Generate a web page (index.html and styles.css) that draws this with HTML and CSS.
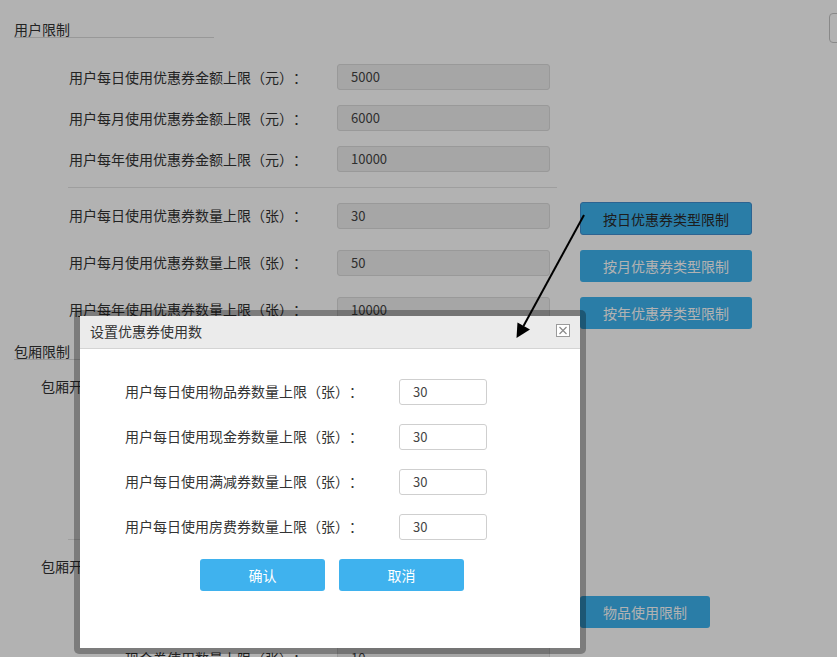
FILE: index.html
```html
<!DOCTYPE html>
<html lang="zh-CN">
<head>
<meta charset="utf-8">
<title>优惠券使用限制</title>
<link rel="stylesheet" href="styles.css">
</head>
<body>
<div class="page">
  <div class="top-bar">
    <div class="section-title first">用户限制</div>
    <button class="corner-btn" aria-label="保存"></button>
  </div>

  <div class="rows rows-amount">
    <div class="row"><span class="label">用户每日使用优惠券金额上限（元）：</span><div class="field">5000</div></div>
    <div class="row"><span class="label">用户每月使用优惠券金额上限（元）：</span><div class="field">6000</div></div>
    <div class="row"><span class="label">用户每年使用优惠券金额上限（元）：</span><div class="field">10000</div></div>
  </div>

  <div class="divider"></div>

  <div class="rows rows-count">
    <div class="row"><span class="label">用户每日使用优惠券数量上限（张）：</span><div class="field">30</div><button class="btn btn-type dark-text">按日优惠券类型限制</button></div>
    <div class="row"><span class="label">用户每月使用优惠券数量上限（张）：</span><div class="field">50</div><button class="btn btn-type">按月优惠券类型限制</button></div>
    <div class="row"><span class="label">用户每年使用优惠券数量上限（张）：</span><div class="field">10000</div><button class="btn btn-type">按年优惠券类型限制</button></div>
  </div>

  <div class="section-title">包厢限制</div>

  <div class="row row-outer"><span class="label">包厢开关：</span></div>

  <div class="rows rows-hidden">
    <div class="row"><span class="label">包厢开放开始时间：</span><div class="field short">09:00</div></div>
    <div class="row"><span class="label">包厢开放结束时间：</span><div class="field short">22:00</div></div>
    <div class="row"><span class="label">包厢最长使用时长：</span><div class="field short">4</div></div>
  </div>

  <div class="divider second"></div>

  <div class="row row-outer row-outer-2"><span class="label">包厢开放设置：</span></div>

  <div class="row row-btn"><button class="btn btn-item">物品使用限制</button></div>

  <div class="row row-bottom"><span class="label">现金券使用数量上限（张）：</span><div class="field">10</div></div>
</div>

<div class="overlay"></div>

<div class="modal">
  <div class="modal-header">
    <span class="modal-title">设置优惠券使用数</span>
    <button class="modal-close" aria-label="关闭">
      <svg width="14" height="13" viewBox="0 0 14 13"><rect x="0.5" y="0.5" width="13" height="12" fill="#fff" stroke="#9a9a9a"/><path d="M3.5 3 L10.5 10 M10.5 3 L3.5 10" stroke="#8a8a8a" stroke-width="1.2"/></svg>
    </button>
  </div>
  <div class="modal-body">
    <div class="m-row"><span class="m-label">用户每日使用物品券数量上限（张）：</span><div class="m-field">30</div></div>
    <div class="m-row"><span class="m-label">用户每日使用现金券数量上限（张）：</span><div class="m-field">30</div></div>
    <div class="m-row"><span class="m-label">用户每日使用满减券数量上限（张）：</span><div class="m-field">30</div></div>
    <div class="m-row"><span class="m-label">用户每日使用房费券数量上限（张）：</span><div class="m-field">30</div></div>
    <div class="m-actions">
      <button class="m-btn">确认</button>
      <button class="m-btn">取消</button>
    </div>
  </div>
</div>

<svg class="arrow" width="837" height="657" viewBox="0 0 837 657">
  <line x1="584" y1="215" x2="523.5" y2="326" stroke="#000" stroke-width="2"/>
  <polygon points="516.5,338 517.5,322.5 530,329.5" fill="#000"/>
</svg>
</body>
</html>
```

FILE: styles.css
```css
* {
  box-sizing: border-box;
}

html, body {
  margin: 0;
  padding: 0;
  width: 837px;
  height: 657px;
  overflow: hidden;
  background: #fff;
}

body {
  font-family: "Noto Sans CJK SC", "Microsoft YaHei", sans-serif;
  font-size: 14px;
  color: #333;
  position: relative;
  text-spacing-trim: space-all;
}

button {
  font-family: inherit;
  cursor: pointer;
}

.page {
  width: 837px;
  overflow: hidden;
}

.top-bar {
  display: flex;
  align-items: flex-start;
  height: 43px;
  overflow: hidden;
}

.section-title {
  margin-left: 14px;
  width: 200px;
  flex-shrink: 0;
  height: 17px;
  line-height: 16px;
  font-size: 14px;
  color: #333;
  border-bottom: 1px solid #dadada;
  margin-top: 14px;
}

.section-title.first {
  margin-top: 21px;
}

.corner-btn {
  margin-left: 615px;
  margin-top: 13px;
  width: 60px;
  height: 30px;
  flex-shrink: 0;
  border: 1px solid #c4c4c4;
  border-radius: 4px;
  background: #fff;
  padding: 0;
}

.rows {
  display: flex;
  flex-direction: column;
  padding-left: 69px;
}

.row {
  display: flex;
  align-items: center;
}

.label {
  width: 268px;
  flex-shrink: 0;
  white-space: nowrap;
  line-height: 26px;
  font-size: 14px;
}

.field {
  width: 213px;
  height: 26px;
  flex-shrink: 0;
  border: 1px solid #dbdbdb;
  border-radius: 3px;
  background: #eee;
  padding-left: 13px;
  font-size: 13px;
  line-height: 24px;
  color: #444;
}

.field.short {
  width: 150px;
}

.rows-amount {
  margin-top: 21px;
  gap: 15px;
}

.rows-amount .row {
  height: 26px;
}

.divider {
  margin-left: 68px;
  width: 489px;
  height: 1px;
  background: #e3e3e3;
  margin-top: 15px;
}

.rows-count {
  margin-top: 15px;
  gap: 15px;
}

.rows-count .row {
  height: 32px;
  align-items: flex-start;
}

.rows-count .label {
  line-height: 24px;
}

.btn {
  height: 32px;
  border: none;
  border-radius: 3px;
  background: #3db3ef;
  color: #fff;
  font-size: 14px;
  padding: 0;
  flex-shrink: 0;
}

.btn-type {
  width: 172px;
  margin-left: 30px;
}

.btn-type.dark-text {
  color: #2a2a2a;
  height: 33px;
  margin-top: -1px;
  border: 1px solid #3f8fd0;
}

.row-outer {
  padding-left: 41px;
  height: 26px;
  margin-top: 13px;
}

.rows-hidden {
  margin-top: 15px;
  gap: 15px;
  padding-left: 125px;
}

.rows-hidden .row {
  height: 26px;
}

.rows-hidden .label {
  width: 212px;
}

.divider.second {
  margin-top: 17px;
}

.row-outer-2 {
  margin-top: 13px;
}

.row-btn {
  margin-top: 17px;
  padding-left: 580px;
  height: 32px;
}

.btn-item {
  width: 130px;
}

.row-bottom {
  margin-top: 17px;
  padding-left: 125px;
  height: 26px;
}

.row-bottom .label {
  width: 212px;
}

.overlay {
  position: absolute;
  left: 0;
  top: 0;
  width: 837px;
  height: 657px;
  background: rgba(0, 0, 0, 0.3);
}

.modal {
  position: absolute;
  left: 74px;
  top: 310px;
  width: 512px;
  height: 344px;
  border: 6px solid rgba(0, 0, 0, 0.3);
  border-radius: 5px;
  background: #fff;
  background-clip: padding-box;
  display: flex;
  flex-direction: column;
}

.modal-header {
  height: 33px;
  flex-shrink: 0;
  background: #ebebeb;
  border-bottom: 1px solid #d4d4d4;
  display: flex;
  align-items: flex-start;
  justify-content: space-between;
  padding: 0 10px;
}

.modal-title {
  line-height: 30px;
  font-size: 14px;
  color: #333;
}

.modal-close {
  margin-top: 8px;
  width: 14px;
  height: 13px;
  padding: 0;
  border: none;
  background: transparent;
  display: block;
}

.modal-close svg {
  display: block;
}

.modal-body {
  padding: 30px 0 0 45px;
  display: flex;
  flex-direction: column;
  gap: 20px;
}

.m-row {
  display: flex;
  align-items: center;
  height: 25px;
}

.m-label {
  width: 274px;
  flex-shrink: 0;
  white-space: nowrap;
  font-size: 14px;
  color: #333;
  line-height: 25px;
}

.m-field {
  width: 88px;
  height: 26px;
  border: 1px solid #cfcfcf;
  border-radius: 3px;
  background: #fff;
  padding-left: 13px;
  font-size: 13px;
  line-height: 24px;
  color: #444;
}

.m-actions {
  display: flex;
  gap: 14px;
  padding-left: 75px;
}

.m-btn {
  width: 125px;
  height: 32px;
  border: none;
  border-radius: 3px;
  background: #3fb2ee;
  color: #fff;
  font-size: 14px;
  padding: 0;
}

.arrow {
  position: absolute;
  left: 0;
  top: 0;
  pointer-events: none;
}
```
